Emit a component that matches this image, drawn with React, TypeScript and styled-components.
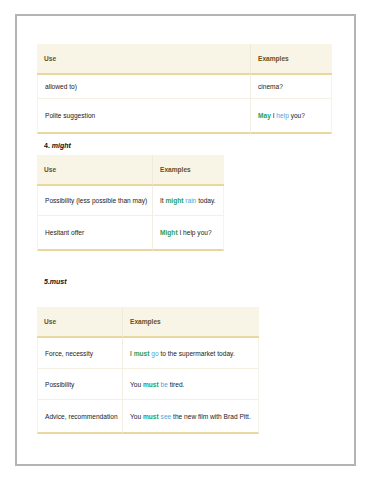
import React from 'react'
import styled, { createGlobalStyle } from 'styled-components'

const Global = createGlobalStyle`
  html, body {
    margin: 0;
    padding: 0;
    background: #ffffff;
  }
  body {
    font-family: "Liberation Sans", Arial, sans-serif;
  }
`

const Page = styled.div`
  box-sizing: border-box;
  width: 341px;
  height: 452px;
  margin: 14px 0 0 15px;
  border: 2px solid #b4b4b4;
  padding: 28px 0 0 20px;
  background: #ffffff;
`

const Table = styled.table<{ $width: number }>`
  width: ${p => p.$width}px;
  table-layout: fixed;
  border-collapse: separate;
  border-spacing: 0;
  font-size: 6.6px;
  color: #222222;
`

const HeadCell = styled.th<{ $width?: number }>`
  box-sizing: border-box;
  width: ${p => (p.$width ? `${p.$width}px` : 'auto')};
  height: 31px;
  padding: 0 6px 0 7px;
  text-align: left;
  vertical-align: middle;
  font-weight: bold;
  color: #65511f;
  background: #f8f5e7;
  border-bottom: 2px solid #ead7a0;
  white-space: nowrap;
  &:first-child {
    border-right: 1px solid #f0ead6;
  }
`

const Cell = styled.td<{ $h: number; $last?: boolean }>`
  box-sizing: border-box;
  height: ${p => p.$h}px;
  padding: 0 4px 0 7px;
  vertical-align: middle;
  background: #ffffff;
  white-space: nowrap;
  border-bottom: ${p => (p.$last ? '2px solid #ead7a0' : '1px solid #f4f0e2')};
  &:first-child {
    border-right: 1px solid #f2eee1;
    border-left: 1px solid #f6f3ea;
  }
  &:last-child {
    border-right: 1px solid #f6f3ea;
  }
`

const Heading = styled.div<{ $top: number; $bottom: number }>`
  margin: ${p => p.$top}px 0 ${p => p.$bottom}px 7px;
  height: 10px;
  line-height: 10px;
  font-size: 7px;
  font-weight: bold;
  color: #111111;
`

const Verb = styled.span`
  color: #2a9e58;
  font-weight: bold;
`

const Word = styled.span`
  color: #4fa3d8;
`

type Row = { use: React.ReactNode; ex: React.ReactNode; h: number }

const DataTable: React.FC<{ width: number; first: number; rows: Row[] }> = ({ width, first, rows }) => (
  <Table $width={width}>
    <thead>
      <tr>
        <HeadCell $width={first}>Use</HeadCell>
        <HeadCell>Examples</HeadCell>
      </tr>
    </thead>
    <tbody>
      {rows.map((r, i) => (
        <tr key={i}>
          <Cell $h={r.h} $last={i === rows.length - 1}>{r.use}</Cell>
          <Cell $h={r.h} $last={i === rows.length - 1}>{r.ex}</Cell>
        </tr>
      ))}
    </tbody>
  </Table>
)

const App: React.FC = () => {
  return (
    <>
      <Global />
      <Page>
        <DataTable
          width={295}
          first={214}
          rows={[
            { use: 'allowed to)', ex: 'cinema?', h: 24 },
            {
              use: 'Polite suggestion',
              ex: (
                <>
                  <Verb>May</Verb>{' I '}<Word>help</Word> you?
                </>
              ),
              h: 35,
            },
          ]}
        />

        <Heading $top={7} $bottom={4}>
          4. <i>might</i>
        </Heading>

        <DataTable
          width={187}
          first={116}
          rows={[
            {
              use: 'Possibility (less possible than may)',
              ex: (
                <>
                  It <Verb>might</Verb> <Word>rain</Word> today.
                </>
              ),
              h: 30,
            },
            {
              use: 'Hesitant offer',
              ex: (
                <>
                  <Verb>Might</Verb>{' I help you?'}
                </>
              ),
              h: 35,
            },
          ]}
        />

        <Heading $top={26} $bottom={20}>
          <i>5.must</i>
        </Heading>

        <DataTable
          width={222}
          first={86}
          rows={[
            {
              use: 'Force, necessity',
              ex: (
                <>
                  I <Verb>must</Verb> <Word>go</Word> to the supermarket today.
                </>
              ),
              h: 31,
            },
            {
              use: 'Possibility',
              ex: (
                <>
                  You <Verb>must</Verb> <Word>be</Word> tired.
                </>
              ),
              h: 31,
            },
            {
              use: 'Advice, recommendation',
              ex: (
                <>
                  You <Verb>must</Verb> <Word>see</Word> the new film with Brad Pitt.
                </>
              ),
              h: 34,
            },
          ]}
        />
      </Page>
    </>
  )
}

export default App
